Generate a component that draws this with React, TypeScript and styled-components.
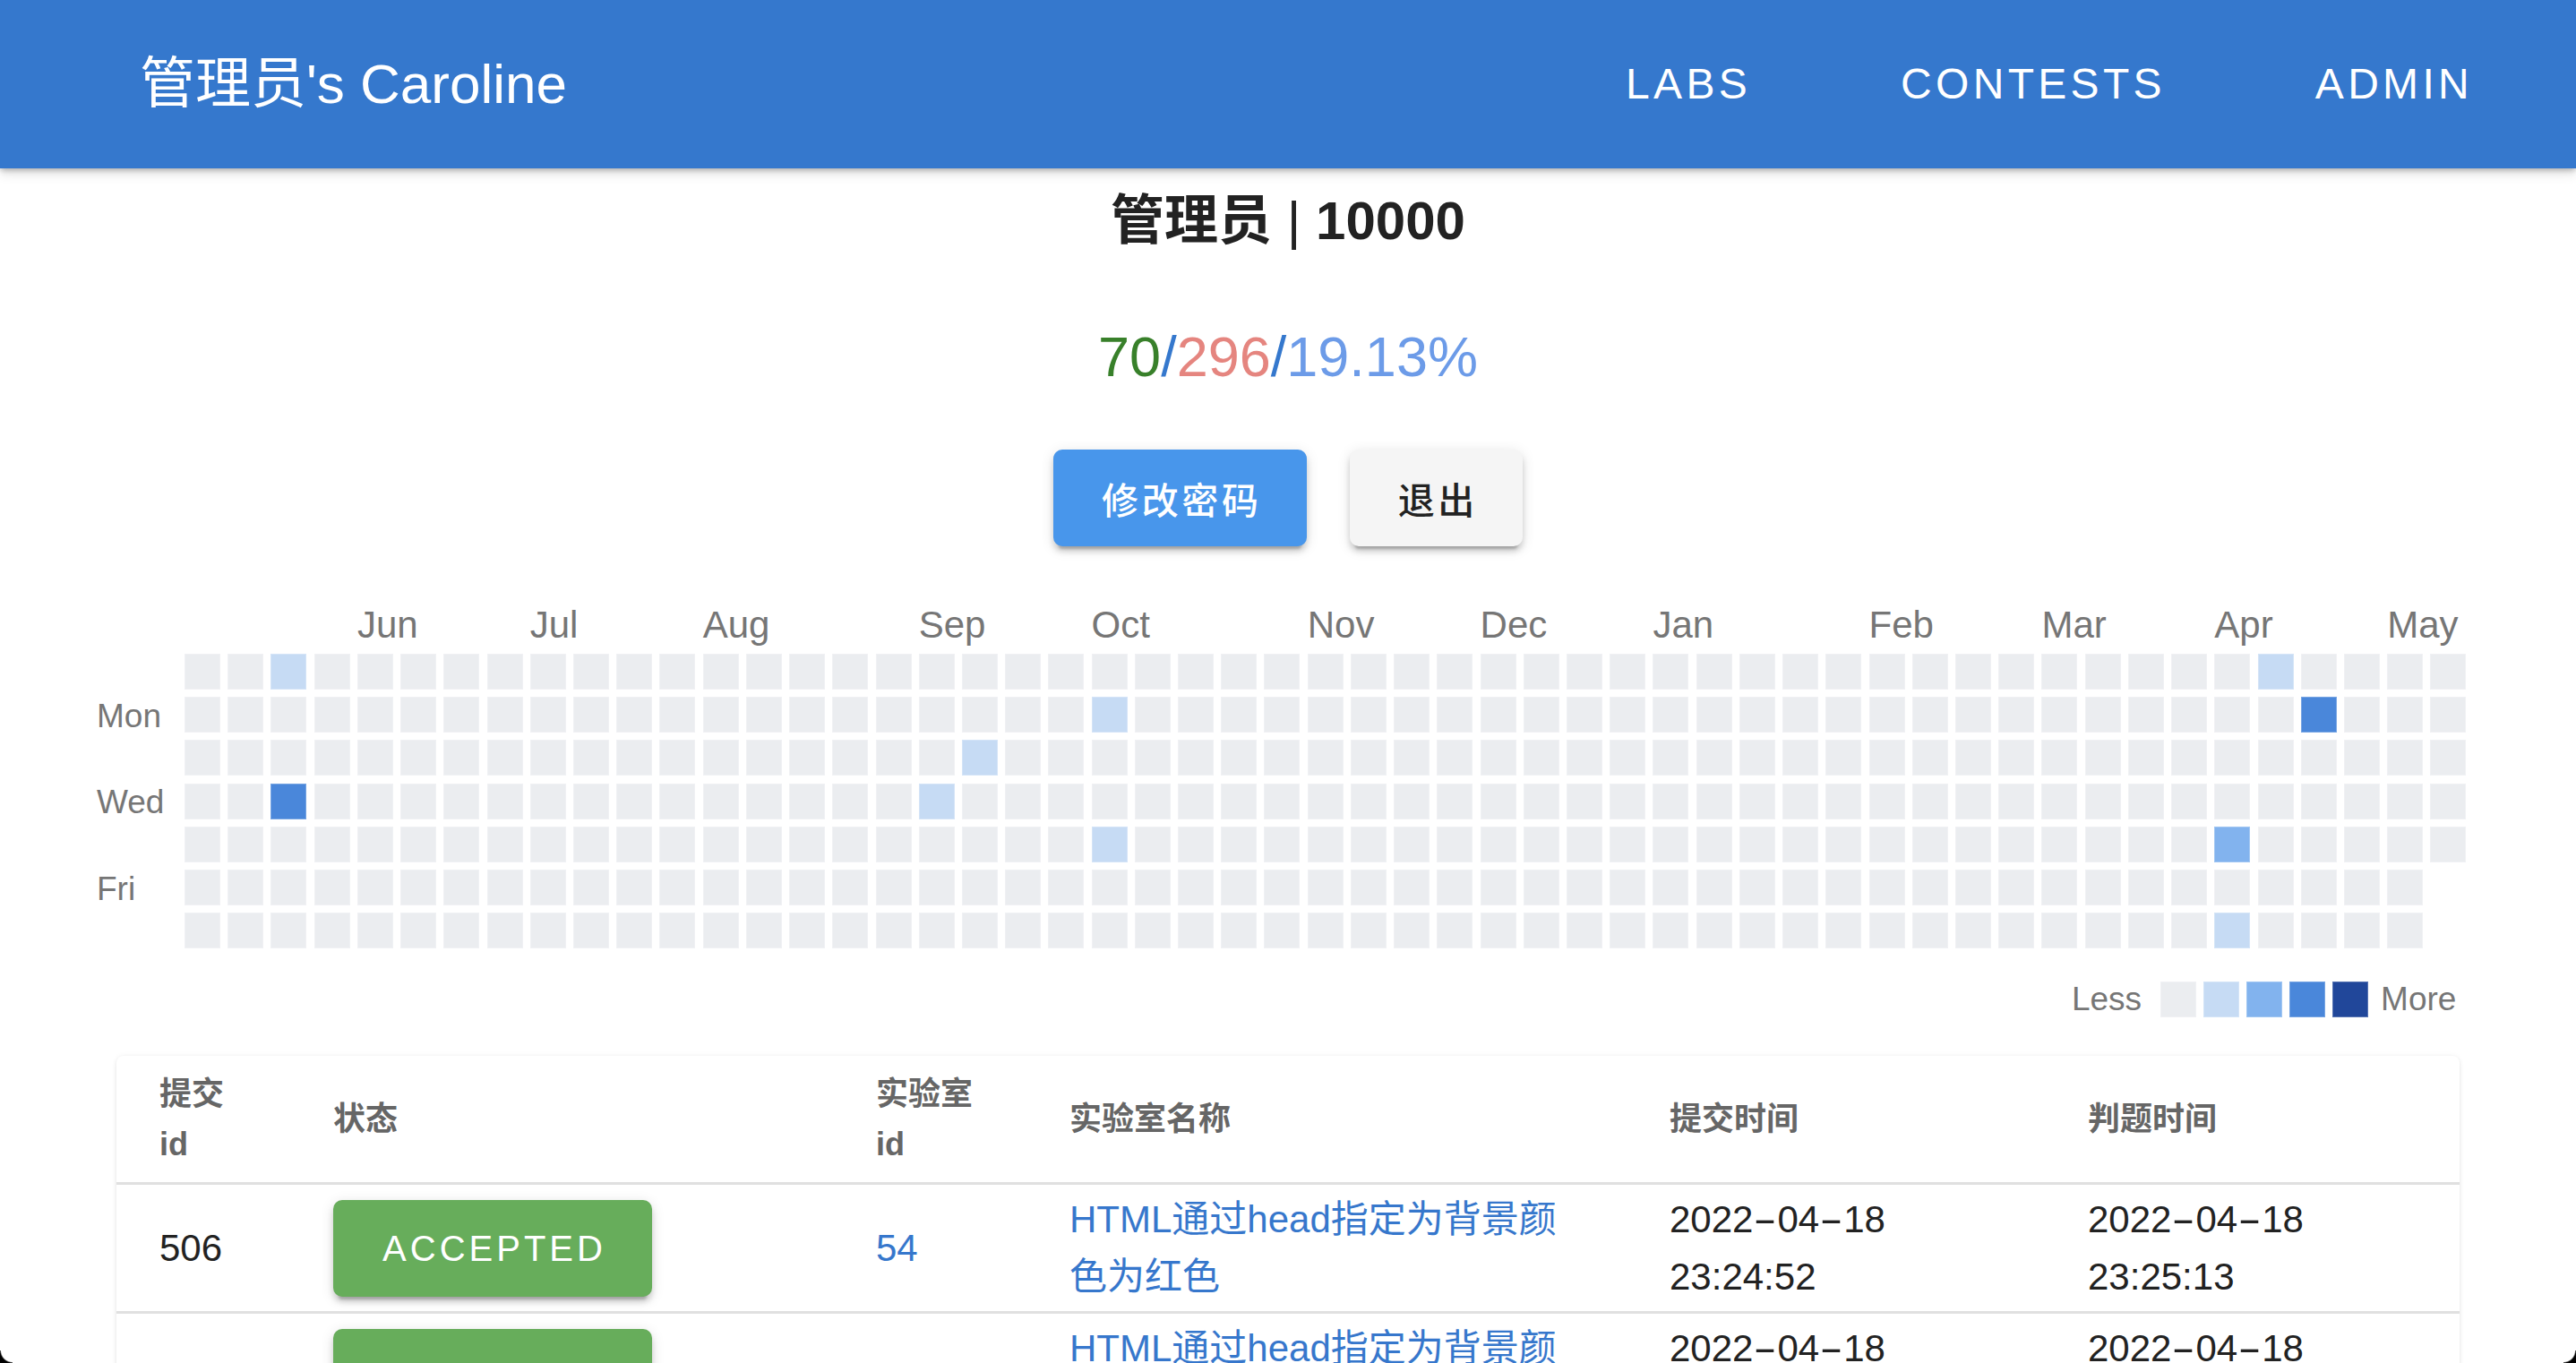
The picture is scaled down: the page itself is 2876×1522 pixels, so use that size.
import React from "react";
import styled, { createGlobalStyle } from "styled-components";

const GlobalStyle = createGlobalStyle`
  * { box-sizing: border-box; }
  html, body { margin: 0; padding: 0; overflow: hidden; background: #fff; }
  body {
    font-family: "Liberation Sans", "Noto Sans CJK SC", sans-serif;
    color: #222;
  }
`;

const Page = styled.div`
  width: 2876px;
  min-height: 1522px;
  display: flex;
  flex-direction: column;
`;

const Header = styled.header`
  position: relative;
  z-index: 2;
  height: 188px;
  background: #3578cd;
  display: flex;
  align-items: center;
  padding: 0 115px 0 156px;
  box-shadow: 0 3px 6px -1px rgba(0, 0, 0, 0.25), 0 6px 12px 0 rgba(0, 0, 0, 0.12);
`;

const Title = styled.div`
  font-size: 62px;
  line-height: 72px;
  color: #fff;
  white-space: nowrap;
`;

const Nav = styled.nav`
  margin-left: auto;
  display: flex;
  gap: 167px;
`;

const NavLink = styled.a`
  font-size: 48px;
  line-height: 56px;
  letter-spacing: 4.3px;
  color: #fff;
  text-transform: uppercase;
  text-decoration: none;
  font-weight: 500;
`;

const Main = styled.main`
  display: flex;
  flex-direction: column;
  align-items: center;
`;

const Heading = styled.h1`
  margin: 23px 0 0;
  font-size: 60px;
  line-height: 72px;
  font-weight: 700;
  color: #222;
`;

const Bar = styled.span`
  font-weight: 400;
`;

const Stats = styled.div`
  margin-top: 77px;
  font-size: 63px;
  line-height: 76px;
`;

const StatPart = styled.span<{ $c: string }>`
  color: ${(p) => p.$c};
`;

const ButtonRow = styled.div`
  margin-top: 66px;
  display: flex;
  gap: 48px;
`;

const ActionButton = styled.button<{ $primary?: boolean }>`
  height: 108px;
  padding: 0 50px 0 54px;
  border: none;
  border-radius: 10px;
  font-family: inherit;
  font-size: 41px;
  font-weight: 500;
  letter-spacing: 3.66px;
  background: ${(p) => (p.$primary ? "#4896eb" : "#f5f5f5")};
  color: ${(p) => (p.$primary ? "#fff" : "#222")};
  box-shadow: 0 9px 3px -6px rgba(0, 0, 0, 0.2), 0 6px 6px 0 rgba(0, 0, 0, 0.14),
    0 3px 15px 0 rgba(0, 0, 0, 0.12);
`;

const Heat = styled.section`
  align-self: stretch;
  margin: 64px 0 0 108px;
  display: grid;
  grid-template-columns: 98px max-content;
`;

const Blank = styled.div``;

const MonthRow = styled.div`
  display: grid;
  grid-template-columns: repeat(53, 40px);
  column-gap: 8.23px;
  height: 48px;
  margin-bottom: 8px;
`;

const MonthLabel = styled.span<{ $col: number }>`
  grid-column: ${(p) => p.$col + 1} / span 2;
  font-size: 42px;
  line-height: 48px;
  color: #767676;
  white-space: nowrap;
`;

const DayCol = styled.div`
  display: grid;
  grid-template-rows: repeat(7, 40px);
  row-gap: 8.23px;
`;

const DayLabel = styled.span<{ $row: number }>`
  grid-row: ${(p) => p.$row + 1};
  align-self: center;
  font-size: 37px;
  line-height: 40px;
  margin-top: 3px;
  color: #767676;
`;

const Cells = styled.div`
  display: grid;
  grid-template-rows: repeat(7, 40px);
  grid-auto-flow: column;
  grid-auto-columns: 40px;
  gap: 8.23px;
`;

const LEVELS = ["#ebedf0", "#c6dbf4", "#82b3ee", "#4a87da", "#21479a"];

const Cell = styled.div<{ $level: number }>`
  width: 40px;
  height: 40px;
  background: ${(p) => LEVELS[p.$level]};
  box-shadow: inset 0 0 0 1px rgba(255, 255, 255, 0.25);
`;

const Legend = styled.div`
  grid-column: 2;
  display: flex;
  align-items: center;
  justify-content: flex-end;
  margin-top: 37px;
  padding-right: 11px;
`;

const LegendText = styled.span<{ $side: "left" | "right" }>`
  font-size: 37px;
  line-height: 40px;
  color: #767676;
  margin: ${(p) => (p.$side === "left" ? "0 21px 0 0" : "0 0 0 14px")};
`;

const Swatches = styled.div`
  display: flex;
  gap: 8px;
`;

const Card = styled.div`
  align-self: stretch;
  margin: 43px 130px 0;
  background: #fff;
  border-radius: 8px;
  overflow: hidden;
  box-shadow: 0 2px 4px rgba(0, 0, 0, 0.08), 0 0 6px rgba(0, 0, 0, 0.05);
`;

const Table = styled.table`
  width: 100%;
  table-layout: fixed;
  border-collapse: separate;
  border-spacing: 0;
`;

const Th = styled.th<{ $w: number }>`
  width: ${(p) => p.$w}px;
  height: 144px;
  padding: 0 48px;
  text-align: left;
  font-size: 36px;
  line-height: 56px;
  font-weight: 700;
  color: #666;
  border-bottom: 3px solid #e0e0e0;
`;

const Td = styled.td`
  height: 144px;
  padding: 0 48px;
  font-size: 42px;
  line-height: 64px;
  color: #222;
  vertical-align: middle;
  border-bottom: 3px solid #e0e0e0;
`;

const Accepted = styled.div`
  width: 356px;
  height: 108px;
  display: flex;
  align-items: center;
  justify-content: center;
  padding-left: 4px;
  background: #67ad5b;
  color: #fff;
  border-radius: 10px;
  font-size: 40px;
  font-weight: 500;
  letter-spacing: 4px;
  box-shadow: 0 9px 3px -6px rgba(0, 0, 0, 0.2), 0 6px 6px 0 rgba(0, 0, 0, 0.14),
    0 3px 15px 0 rgba(0, 0, 0, 0.12);
`;

const Link = styled.a`
  color: #3677cc;
  text-decoration: none;
`;

const Line = styled.span`
  display: block;
  white-space: nowrap;
`;

const Dash = styled.span`
  display: inline-block;
  width: 27px;
  text-align: center;
  transform: scaleX(1.9);
`;

const Corner = styled.div<{ $side: "left" | "right" }>`
  position: fixed;
  bottom: 0;
  ${(p) => p.$side}: 0;
  width: 14px;
  height: 14px;
  z-index: 10;
  background: radial-gradient(
    circle at ${(p) => (p.$side === "right" ? "0 0" : "100% 0")},
    transparent 12.5px,
    #000 14px
  );
`;

const MONTHS: [string, number][] = [
  ["Jun", 4],
  ["Jul", 8],
  ["Aug", 12],
  ["Sep", 17],
  ["Oct", 21],
  ["Nov", 26],
  ["Dec", 30],
  ["Jan", 34],
  ["Feb", 39],
  ["Mar", 43],
  ["Apr", 47],
  ["May", 51],
];

const ACTIVE: Record<string, number> = {
  "2,0": 1,
  "2,3": 3,
  "17,3": 1,
  "18,2": 1,
  "21,1": 1,
  "21,4": 1,
  "47,4": 2,
  "47,6": 1,
  "48,0": 1,
  "49,1": 3,
};

const COLS = 53;

const cells: { key: string; level: number }[] = [];
for (let c = 0; c < COLS; c++) {
  const rows = c === COLS - 1 ? 5 : 7;
  for (let r = 0; r < rows; r++) {
    const k = `${c},${r}`;
    cells.push({ key: k, level: ACTIVE[k] ?? 0 });
  }
}

const ROWS = [
  { id: 506, lab: 54, name: "HTML通过head指定为背景颜色为红色", submit: ["2022-04-18", "23:24:52"], judge: ["2022-04-18", "23:25:13"] },
  { id: 505, lab: 54, name: "HTML通过head指定为背景颜色为红色", submit: ["2022-04-18", "23:20:31"], judge: ["2022-04-18", "23:20:47"] },
];

function DateText({ value }: { value: string }) {
  const parts = value.split("-");
  return (
    <Line>
      {parts.map((p, i) => (
        <React.Fragment key={i}>
          {i > 0 && <Dash>-</Dash>}
          {p}
        </React.Fragment>
      ))}
    </Line>
  );
}

export default function App() {
  return (
    <Page>
      <GlobalStyle />
      <Header>
        <Title>管理员's Caroline</Title>
        <Nav>
          <NavLink>Labs</NavLink>
          <NavLink>Contests</NavLink>
          <NavLink>Admin</NavLink>
        </Nav>
      </Header>
      <Main>
        <Heading>
          管理员 <Bar>|</Bar> 10000
        </Heading>
        <Stats>
          <StatPart $c="#38802a">70</StatPart>
          <StatPart $c="#3578cd">/</StatPart>
          <StatPart $c="#e5857f">296</StatPart>
          <StatPart $c="#3578cd">/</StatPart>
          <StatPart $c="#6c9be8">19.13%</StatPart>
        </Stats>
        <ButtonRow>
          <ActionButton $primary>修改密码</ActionButton>
          <ActionButton>退出</ActionButton>
        </ButtonRow>

        <Heat>
          <Blank />
          <MonthRow>
            {MONTHS.map(([m, c]) => (
              <MonthLabel key={m} $col={c}>
                {m}
              </MonthLabel>
            ))}
          </MonthRow>
          <DayCol>
            <DayLabel $row={1}>Mon</DayLabel>
            <DayLabel $row={3}>Wed</DayLabel>
            <DayLabel $row={5}>Fri</DayLabel>
          </DayCol>
          <Cells>
            {cells.map((c) => (
              <Cell key={c.key} $level={c.level} />
            ))}
          </Cells>
          <Legend>
            <LegendText $side="left">Less</LegendText>
            <Swatches>
              {LEVELS.map((_, i) => (
                <Cell key={i} $level={i} />
              ))}
            </Swatches>
            <LegendText $side="right">More</LegendText>
          </Legend>
        </Heat>

        <Card>
          <Table>
            <thead>
              <tr>
                <Th $w={194}>提交 id</Th>
                <Th $w={606}>状态</Th>
                <Th $w={216}>实验室 id</Th>
                <Th $w={670}>实验室名称</Th>
                <Th $w={467}>提交时间</Th>
                <Th $w={463}>判题时间</Th>
              </tr>
            </thead>
            <tbody>
              {ROWS.map((r) => (
                <tr key={r.id}>
                  <Td>{r.id}</Td>
                  <Td>
                    <Accepted>ACCEPTED</Accepted>
                  </Td>
                  <Td>
                    <Link>{r.lab}</Link>
                  </Td>
                  <Td>
                    <Link>{r.name}</Link>
                  </Td>
                  <Td>
                    <DateText value={r.submit[0]} />
                    <Line>{r.submit[1]}</Line>
                  </Td>
                  <Td>
                    <DateText value={r.judge[0]} />
                    <Line>{r.judge[1]}</Line>
                  </Td>
                </tr>
              ))}
            </tbody>
          </Table>
        </Card>
      </Main>
      <Corner $side="left" />
      <Corner $side="right" />
    </Page>
  );
}
